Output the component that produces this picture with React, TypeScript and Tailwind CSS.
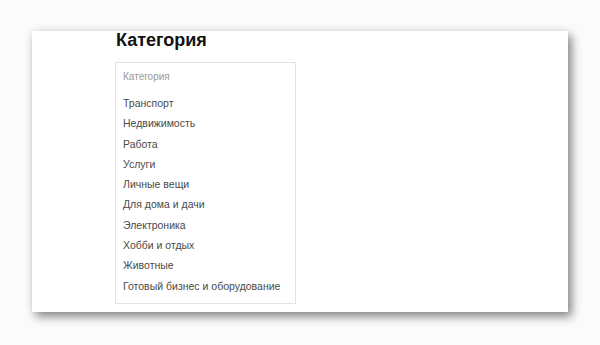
import React from "react";

const categories = [
    "Транспорт",
    "Недвижимость",
    "Работа",
    "Услуги",
    "Личные вещи",
    "Для дома и дачи",
    "Электроника",
    "Хобби и отдых",
    "Животные",
    "Готовый бизнес и оборудование",
];

export default () => {
    return (
        <div className="w-[600px] h-[345px] bg-[#fbfbfb] pt-[31px] pl-[32px] font-['Liberation_Sans',Arial,sans-serif]">
            <div className="w-[536px] h-[281px] bg-white shadow-[0_0_8px_rgba(0,0,0,0.10),4px_5px_9px_rgba(0,0,0,0.42)] pl-[83px]">
                <div className="text-[18px] leading-[18px] font-bold text-[#111] pl-px">Категория</div>
                <div className="mt-[13px] w-[181px] border border-[#e2e2e2] pl-[7px] pt-[7px] pb-[7px]">
                    <div className="text-[10px] leading-[14px] text-[#999]">Категория</div>
                    <ul className="mt-[9px]">
                        {categories.map((c) => (
                            <li key={c} className="text-[10.5px] leading-[20.3px] text-[#4a4a4a]">
                                {c}
                            </li>
                        ))}
                    </ul>
                </div>
            </div>
        </div>
    );
};
